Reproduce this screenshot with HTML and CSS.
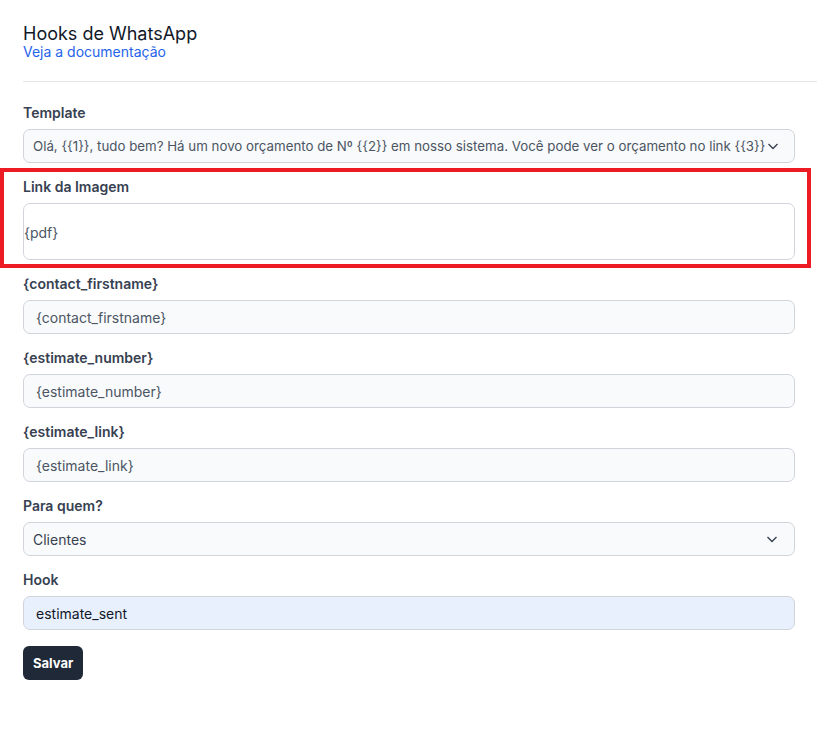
FILE: index.html
```html
<!DOCTYPE html>
<html lang="pt-BR">
<head>
    <meta charset="UTF-8">
    <title>Hooks de WhatsApp</title>
    <link rel="stylesheet" href="styles.css">
</head>
<body>
<div class="panel">
    <div class="head">
        <h1 class="title">Hooks de WhatsApp</h1>
        <a class="doc-link" href="#">Veja a documentação</a>
    </div>
    <form class="hook-form">
        <div class="field">
            <label class="label">Template</label>
            <div class="select-wrap">
                <select class="select select-tight">
                    <option>Olá, {{1}}, tudo bem? Há um novo orçamento de Nº {{2}} em nosso sistema. Você pode ver o orçamento no link {{3}}</option>
                </select>
                <svg class="chevron chevron-tight" width="12" height="12" viewBox="0 0 12 12"><path d="M1.5 4l4.5 4.5L10.5 4" fill="none" stroke="#374151" stroke-width="1.4"/></svg>
            </div>
        </div>
        <div class="field field-marked">
            <label class="label">Link da Imagem</label>
            <input class="input input-tall" type="text" value="{pdf}">
        </div>
        <div class="field">
            <label class="label">{contact_firstname}</label>
            <input class="input" type="text" placeholder="{contact_firstname}">
        </div>
        <div class="field">
            <label class="label">{estimate_number}</label>
            <input class="input" type="text" placeholder="{estimate_number}">
        </div>
        <div class="field">
            <label class="label">{estimate_link}</label>
            <input class="input" type="text" placeholder="{estimate_link}">
        </div>
        <div class="field">
            <label class="label">Para quem?</label>
            <div class="select-wrap">
                <select class="select">
                    <option>Clientes</option>
                </select>
                <svg class="chevron" width="12" height="12" viewBox="0 0 12 12"><path d="M1.5 4l4.5 4.5L10.5 4" fill="none" stroke="#374151" stroke-width="1.4"/></svg>
            </div>
        </div>
        <div class="field">
            <label class="label">Hook</label>
            <input class="input input-filled" type="text" value="estimate_sent">
        </div>
        <button class="btn" type="button">Salvar</button>
    </form>
</div>
</body>
</html>
```

FILE: styles.css
```css
* {
    margin: 0;
    padding: 0;
    box-sizing: border-box;
}
body {
    font-family: Inter, "Noto Sans", sans-serif;
    background: #fff;
    color: #111827;
}
.panel {
    padding: 23px 0 0 23px;
}
.head {
    padding-bottom: 22px;
    border-bottom: 1px solid #e5e7eb;
}
.title {
    font-size: 18px;
    font-weight: 400;
    line-height: 22px;
    color: #111827;
}
.doc-link {
    display: block;
    font-size: 14px;
    line-height: 14px;
    color: #2563eb;
    text-decoration: none;
}
.hook-form {
    display: flex;
    flex-direction: column;
    align-items: flex-start;
    padding: 21px 22px 40px 0;
}
.field {
    width: 100%;
    display: flex;
    flex-direction: column;
    margin-bottom: 14px;
}
.field-marked {
    position: relative;
}
.field-marked::after {
    content: "";
    position: absolute;
    top: -9px;
    bottom: -8px;
    left: -23px;
    right: -16px;
    border: 4px solid #ed1c24;
    pointer-events: none;
}
.label {
    font-size: 14px;
    font-weight: 600;
    line-height: 20px;
    color: #374151;
    margin-bottom: 6px;
}
.input,
.select {
    width: 100%;
    height: 34px;
    font-family: inherit;
    font-size: 14px;
    color: #374151;
    background: #f9fafb;
    border: 1px solid #d1d5db;
    border-radius: 7px;
    padding: 0 12px;
    outline: none;
}
.input::placeholder {
    color: #4b5563;
}
.input-tall {
    height: 57px;
    padding: 2px 0 0;
    background: #fff;
    color: #4b5563;
}
.input-filled {
    background: #e8f0fe;
    color: #111827;
}
.select-wrap {
    position: relative;
}
.select {
    appearance: none;
    -webkit-appearance: none;
    padding: 0 36px 0 9px;
}
.select-tight {
    font-size: 13.3px;
    padding-right: 26px;
    color: #4b5563;
}
.chevron {
    position: absolute;
    right: 17px;
    top: 11px;
    pointer-events: none;
}
.chevron-tight {
    right: 16px;
}
.btn {
    height: 34px;
    padding: 0 10px;
    font-family: inherit;
    font-size: 13px;
    font-weight: 700;
    color: #fff;
    background: #1f2937;
    border: none;
    border-radius: 6px;
    margin-top: 2px;
}
```
